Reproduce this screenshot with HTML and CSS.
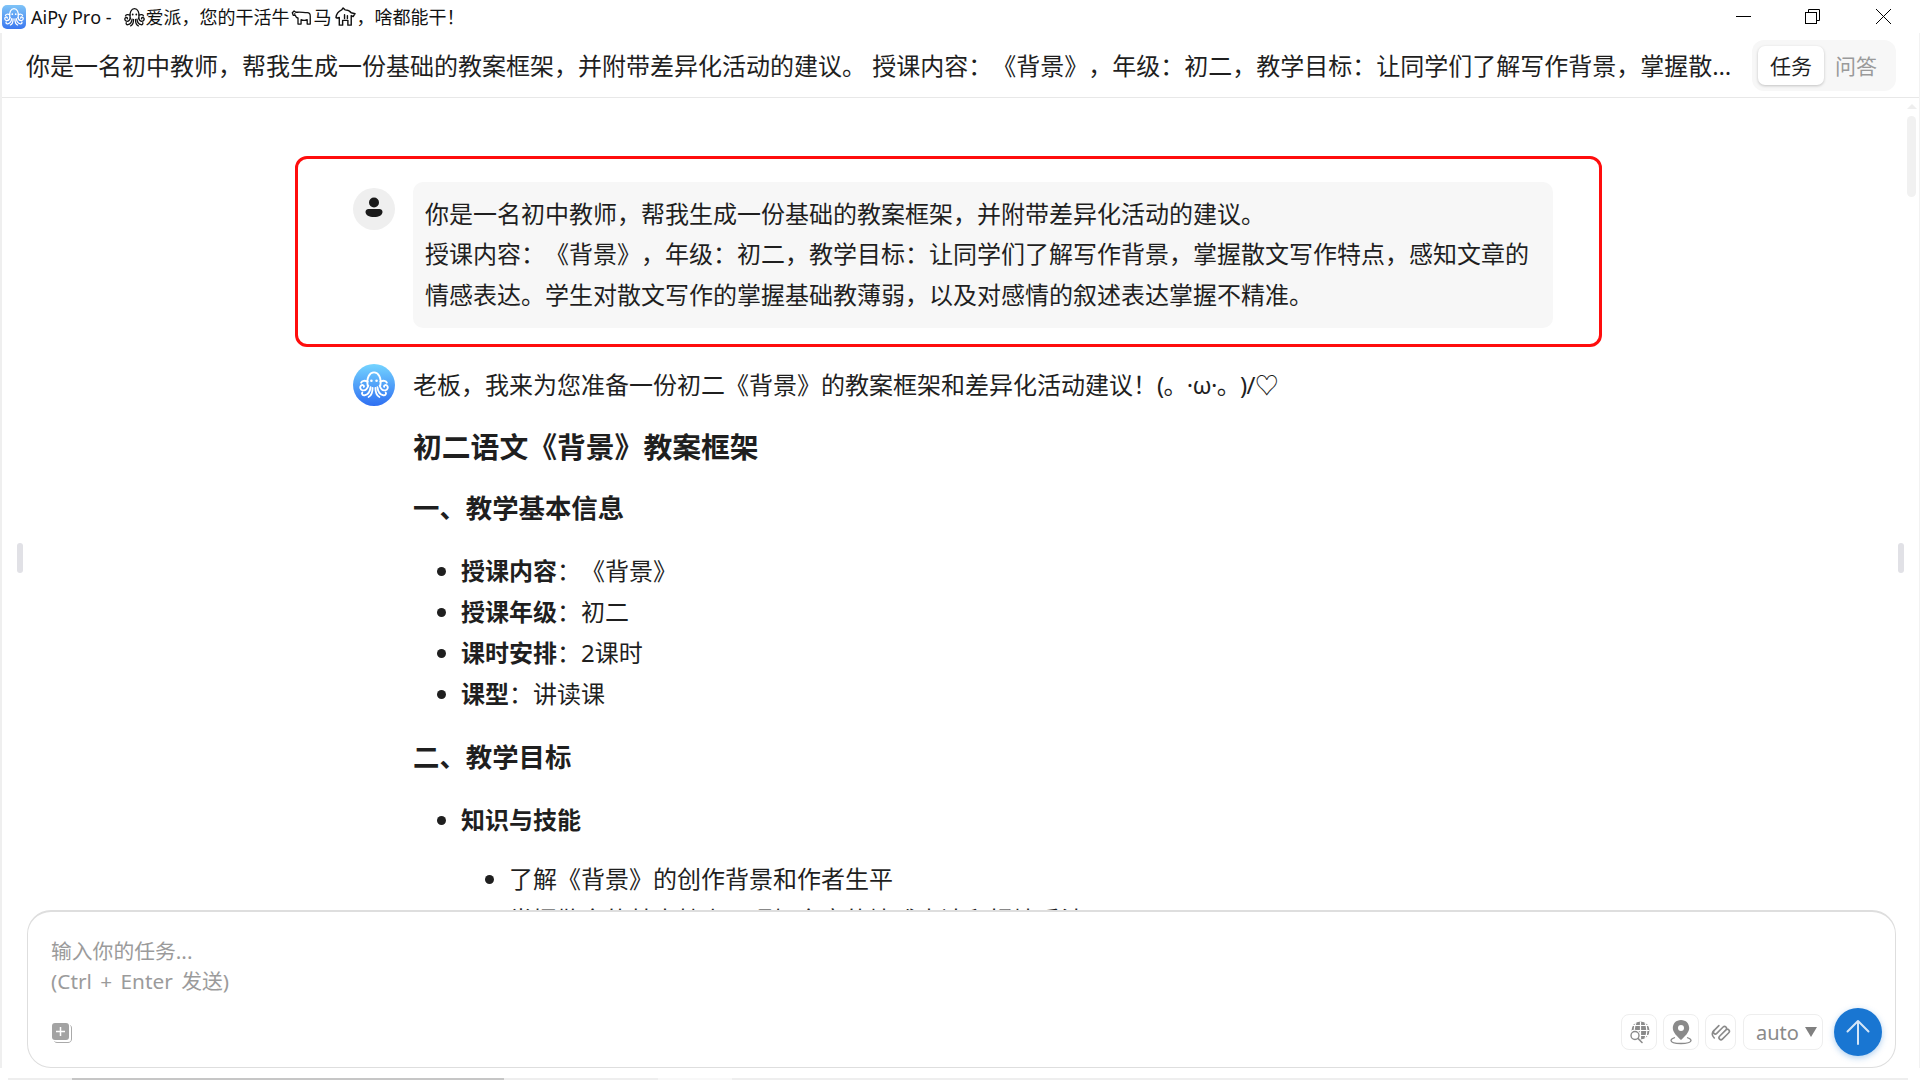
FILE: index.html
```html
<!DOCTYPE html>
<html lang="zh-CN">
<head>
<meta charset="utf-8">
<title>AiPy Pro</title>
<link rel="stylesheet" href="styles.css">
</head>
<body>
<svg class="defs" width="0" height="0" aria-hidden="true">
  <symbol id="octopus" viewBox="1.500 1.500 21 21">
    <g fill="none" stroke="currentColor" stroke-width="1.300" stroke-linecap="round" stroke-linejoin="round">
      <path d="M7.600 12.600C6.600 6.800 9 3.200 12 3.200s5.400 3.600 4.400 9.400"/>
      <path d="M8 12.500c-.8 2.400-2.400 3.600-4 3.200-1.600-.4-2.200-2.400-1-3.400 1-.7 2.200 0 1.900 1"/>
      <path d="M16 12.500c.8 2.400 2.400 3.600 4 3.200 1.600-.4 2.200-2.400 1-3.400-1-.7-2.200 0-1.900 1"/>
      <path d="M9.600 13.600c-.4 3-2 5.200-4.200 5.600-1.400.2-2.200-1-1.600-2"/>
      <path d="M14.400 13.600c.4 3 2 5.200 4.200 5.600 1.400.2 2.200-1 1.600-2"/>
      <path d="M11 14c0 3-.8 5.600-2.800 6.400"/>
      <path d="M13 14c0 3 .8 5.600 2.800 6.400"/>
      <path d="M7.600 9.600C5.400 8.600 3.600 9 3 10.400M16.400 9.600c2.200-1 4-.6 4.600.8"/>
    </g>
    <circle cx="10.200" cy="9" r=".9" fill="currentColor"/>
    <circle cx="13.800" cy="9" r=".9" fill="currentColor"/>
  </symbol>
</svg>

<header class="titlebar">
  <div class="title">
    <span class="appicon"><svg class="octo-white"><use href="#octopus"/></svg></span>
    <span class="title-latin">AiPy Pro -</span>
    <svg class="emoji"><use href="#octopus"/></svg>
    <span>爱派，您的干活牛</span>
    <svg class="emoji emoji-cow" viewBox="0 0 24 24" fill="none" stroke="currentColor" stroke-width="1.500" stroke-linejoin="round" stroke-linecap="round">
      <path d="M1.500 6.500l2-2 2 1.500h2c3-.5 7 .5 11 .5 2.500 0 3.500 1.500 3.500 4v9h-3.500v-5c-2 1-5 1-7 0v5H8v-7c-1 0-2.500-1-3-3H2.500z"/>
      <path d="M4 8h.5"/>
    </svg>
    <span>马</span>
    <svg class="emoji emoji-horse" viewBox="1 1 22 22" fill="none" stroke="currentColor" stroke-width="1.500" stroke-linejoin="round" stroke-linecap="round">
      <path d="M8 4l1.500-2 2 2c3 0 5 1 6.500 3l4 1-2 3-2-1v10h-3.500v-5H9v5H5.500v-8c-1 .5-2.500.5-3.500 0 .5-4 2.500-6.500 6-8z"/>
      <path d="M11 9v4M14 10v3"/>
    </svg>
    <span>，啥都能干！</span>
  </div>
  <div class="winctl">
    <svg width="15" height="15" viewBox="0 0 15 15"><path d="M0 7.500h15" stroke="#000" fill="none"/></svg>
    <svg width="15" height="15" viewBox="0 0 15 15" fill="none" stroke="#000"><rect x=".5" y="3.500" width="11" height="11"/><path d="M3.500 3.500V.5h11v11h-3"/></svg>
    <svg class="winctl-close" width="15" height="15" viewBox="0 0 15 15"><path d="M0 0l15 15M15 0L0 15" stroke="#000" fill="none"/></svg>
  </div>
</header>

<div class="app">
  <section class="taskbar">
    <p class="prompt">你是一名初中教师，帮我生成一份基础的教案框架，并附带差异化活动的建议。 授课内容：《背景》，年级：初二，教学目标：让同学们了解写作背景，掌握散文写作特点，感知文章的情感表达。学生对散文写作的掌握基础教薄弱，以及对感情的叙述表达掌握不精准。</p>
    <div class="tabs">
      <span class="tab tab-on">任务</span>
      <span class="tab">问答</span>
    </div>
  </section>

  <main class="main">
    <div class="chat">
      <div class="thread">
        <article class="msg msg-user">
          <span class="avatar avatar-user">
            <svg width="20" height="22" viewBox="0 0 20 22"><circle cx="10" cy="5.500" r="5"/><path d="M1.500 15c0-2 1.500-3 3-3h11c1.500 0 3 1 3 3 0 3-3.500 5-8.500 5s-8.500-2-8.500-5z"/></svg>
          </span>
          <div class="bubble">你是一名初中教师，帮我生成一份基础的教案框架，并附带差异化活动的建议。<br>授课内容：《背景》，年级：初二，教学目标：让同学们了解写作背景，掌握散文写作特点，感知文章的情感表达。学生对散文写作的掌握基础教薄弱，以及对感情的叙述表达掌握不精准。</div>
          <div class="annotation"></div>
        </article>
        <article class="msg msg-bot">
          <span class="avatar avatar-bot"><svg class="octo-white"><use href="#octopus"/></svg></span>
          <div class="reply">
            <p>老板，我来为您准备一份初二《背景》的教案框架和差异化活动建议！<span class="kao">(。·ω·。)/♡</span></p>
            <h1>初二语文《背景》教案框架</h1>
            <h2>一、教学基本信息</h2>
            <ul>
              <li><strong>授课内容</strong>：《背景》</li>
              <li><strong>授课年级</strong>：初二</li>
              <li><strong>课时安排</strong>：2课时</li>
              <li><strong>课型</strong>：讲读课</li>
            </ul>
            <h2>二、教学目标</h2>
            <ul>
              <li><strong>知识与技能</strong>
                <ul>
                  <li>了解《背景》的创作背景和作者生平</li>
                  <li>掌握散文的基本特点，理解文章的情感表达和抒情手法</li>
                </ul>
              </li>
            </ul>
          </div>
        </article>
      </div>
    </div>
    <div class="rail">
      <span class="rail-up"></span>
      <span class="rail-thumb"></span>
    </div>
  </main>

  <section class="composer">
    <div class="placeholder">输入你的任务...<br><span class="hint">(Ctrl + Enter 发送)</span></div>
    <div class="composer-foot">
      <span class="plus">
        <svg width="21" height="21" viewBox="0 0 21 21">
          <path d="M18.500 2.500c.6.6 1 1.200 1 2.500v11c0 2.200-1.300 3.500-3.500 3.500H5c-1.200 0-2-.4-2.500-1" fill="none" stroke="#aaa"/>
          <rect x="0" y="0" width="17" height="17" rx="3" fill="#a3a3a3"/>
          <path d="M8.500 4v9M4 8.500h9" stroke="#fff" stroke-width="1.500"/>
        </svg>
      </span>
      <div class="tools">
        <span class="tool">
          <svg width="24" height="24" viewBox="0 0 24 24">
            <circle cx="13.500" cy="10.500" r="9" fill="#8a8a8a"/>
            <path d="M4.500 10.500h18M13.500 1.500v18M9 3c-2.500 4-2.500 11 0 15M18 3c2.500 4 2.500 11 0 15M6 5.500h15M6 15.500h15" stroke="#fff" stroke-width="1.200" fill="none"/>
            <circle cx="8" cy="15.500" r="5.800" fill="#fff"/>
            <circle cx="8" cy="15.500" r="4" fill="#fff" stroke="#8a8a8a" stroke-width="1.400"/>
            <path d="M11 18.500l4 4" stroke="#8a8a8a" stroke-width="1.600" stroke-linecap="round"/>
          </svg>
        </span>
        <span class="tool">
          <svg width="24" height="26" viewBox="0 0 24 26">
            <path d="M12 1C7 1 3.800 4.600 3.800 9c0 4.500 4.500 8.500 8.200 12 3.700-3.500 8.200-7.500 8.200-12C20.200 4.600 17 1 12 1z" fill="#8a8a8a"/>
            <circle cx="12" cy="9" r="3" fill="#fff"/>
            <path d="M6 18.500c-2.500.8-4 1.800-4 3 0 1.800 4.500 3 10 3s10-1.200 10-3c0-1.200-1.500-2.200-4-3" fill="none" stroke="#8a8a8a" stroke-width="1.300"/>
          </svg>
        </span>
        <span class="tool tool-clip">
          <svg width="24" height="24" viewBox="0 0 24 24" fill="none" stroke="#8a8a8a" stroke-width="1.600" stroke-linecap="round">
            <g transform="rotate(45 12 12)"><path d="M6 9v7a2 2 0 0 0 4 0V7a2 2 0 0 1 4 0v9a2 2 0 0 0 4 0V7a2 2 0 0 0-4 0"/><path d="M6 16c0 3 2 5 5.500 5"/></g>
          </svg>
        </span>
        <span class="model">auto<svg width="12" height="10" viewBox="0 0 12 10"><path d="M0 0h12L6 10z" fill="#808080"/></svg></span>
        <span class="send">
          <svg width="24" height="26" viewBox="0 0 24 26" fill="none" stroke="#d5e6f7" stroke-width="2" stroke-linecap="round" stroke-linejoin="round"><path d="M12 25V2M1.500 12.500L12 2l10.500 10.500"/></svg>
        </span>
      </div>
    </div>
  </section>
  <span class="handle handle-l"></span>
  <span class="handle handle-r"></span>
</div>

<div class="hscroll">
  <span class="hs-a"></span><span class="hs-thumb"></span><span class="hs-b"></span><span class="hs-c"></span><span class="hs-d"></span>
</div>
</body>
</html>
```

FILE: styles.css
```css
* { box-sizing: border-box; }

html, body { margin: 0; height: 100%; }

body {
  width: 1920px;
  height: 1080px;
  overflow: hidden;
  display: flex;
  flex-direction: column;
  background: #fff;
  color: #1f1f1f;
  font-family: "Noto Sans", "Noto Sans CJK SC", sans-serif;
  font-size: 24px;
  text-spacing-trim: space-all;
  font-kerning: none;
}

.defs { position: absolute; }

/* title bar */
.titlebar {
  height: 33px;
  flex: none;
  display: flex;
  align-items: center;
  justify-content: space-between;
  padding: 0 29px 0 2px;
}

.title {
  display: flex;
  align-items: center;
  font-size: 18px;
  line-height: 24px;
  color: #111;
  padding-top: 1px;
}

.appicon {
  width: 24px;
  height: 24px;
  margin-right: 5px;
  border-radius: 5px;
  display: flex;
  align-items: center;
  justify-content: center;
  background: linear-gradient(180deg, #7fc4f7, #3b78f0);
}

.appicon .octo-white { width: 20px; height: 20px; }

.title-latin { margin-right: 12px; }

.emoji {
  width: 21px;
  height: 21px;
  flex: none;
  color: #111;
  margin-right: 1px;
}

.emoji-cow { margin: 0 2px 0 1px; }
.emoji-horse { margin: 0 1px 0 3px; }

.winctl { display: flex; gap: 54px; margin-top: -1px; }
.winctl-close { margin-left: 2px; }

/* main frame */
.app {
  flex: none;
  height: 1035px;
  position: relative;
  display: flex;
  flex-direction: column;
  border-left: 2px solid #efefef;
  border-right: 1px solid #f2f2f2;
}

.taskbar {
  flex: none;
  height: 65px;
  display: flex;
  align-items: center;
  gap: 18px;
  padding: 0 23px 0 24px;
  border-bottom: 1px solid #e8e8e8;
}

.prompt {
  flex: 1;
  min-width: 0;
  margin: 0;
  line-height: 41px;
  white-space: nowrap;
  overflow: hidden;
  text-overflow: ellipsis;
}

.tabs {
  flex: none;
  width: 144px;
  height: 51px;
  padding: 6px;
  display: flex;
  gap: 1px;
  border-radius: 12px;
  background: #f7f7f7;
}

.tab {
  width: 66px;
  height: 39px;
  display: flex;
  align-items: center;
  justify-content: center;
  font-size: 21px;
  color: #9a9a9a;
  border-radius: 7px;
}

.tab + .tab { width: 62px; }

.tab-on {
  color: #1f1f1f;
  background: #fff;
  box-shadow: 0 1px 3px rgba(0, 0, 0, .22);
}

/* conversation */
.main {
  flex: 1;
  min-height: 0;
  display: flex;
}

.chat {
  flex: 1;
  min-width: 0;
  overflow: hidden;
  padding-top: 84px;
}

.thread {
  width: 1200px;
  margin: 0 auto;
  display: flex;
  flex-direction: column;
  gap: 36px;
}

.msg {
  position: relative;
  display: flex;
  gap: 18px;
  align-items: flex-start;
}

.avatar {
  width: 42px;
  height: 42px;
  flex: none;
  border-radius: 50%;
  display: flex;
  align-items: center;
  justify-content: center;
}

.msg-user .avatar { margin-top: 6px; }

.avatar-user { background: #efefef; }
.avatar-user svg { fill: #1a1a1a; margin-top: -3px; }

.avatar-bot { background: linear-gradient(180deg, #74d4ff 0%, #2f6ff2 100%); }
.octo-white { width: 30px; height: 30px; color: #fff; }

.bubble {
  flex: 1;
  padding: 11.500px 12px 12.100px;
  line-height: 40.800px;
  background: #f7f7f7;
  border-radius: 10px;
}

.annotation {
  position: absolute;
  left: -58px;
  right: -49px;
  top: -26px;
  bottom: -19px;
  border: 3px solid #ff0d0d;
  border-radius: 12px;
  pointer-events: none;
}

.reply { flex: 1; min-width: 0; line-height: 41px; }
.reply p { margin: 0; }

.kao { letter-spacing: -.7px; }

.reply h1 {
  margin: 17px 0 15px;
  font-size: 28.800px;
  line-height: 49px;
  font-weight: 700;
}

.reply h2 {
  margin: 0;
  font-size: 26.400px;
  line-height: 45px;
  font-weight: 700;
}

.reply > ul { margin: 19px 0 21px; }
.reply ul { padding-left: 48px; list-style: disc; }
.reply ul ul { margin: 18px 0 0; list-style: disc; }

.reply strong { font-weight: 700; }

/* right scrollbar */
.rail {
  flex: none;
  width: 15px;
  padding: 6px 0 0 3px;
  display: flex;
  flex-direction: column;
  gap: 7px;
}

.rail-up {
  width: 0;
  height: 0;
  border-left: 5px solid transparent;
  border-right: 5px solid transparent;
  border-bottom: 5px solid #eee;
}

.rail-thumb {
  width: 9px;
  height: 81px;
  border-radius: 5px;
  background: #f1f1f1;
}

/* composer */
.composer {
  flex: none;
  height: 158px;
  margin: 0 23px 0 25px;
  display: flex;
  flex-direction: column;
  border: 1px solid #dedede;
  border-top-width: 2px;
  border-radius: 24px;
  background: #fff;
  padding: 24px 13px 11px 23px;
}

.placeholder {
  font-size: 20.800px;
  line-height: 30px;
  color: #9b9b9b;
}

.hint { word-spacing: 3px; }

.composer-foot {
  margin-top: auto;
  display: flex;
  align-items: center;
  justify-content: space-between;
}

.plus { display: flex; margin-left: 1px; margin-top: 3px; }

.tools { display: flex; align-items: center; gap: 6px; }

.tool {
  width: 36px;
  height: 36px;
  display: flex;
  align-items: center;
  justify-content: center;
  border: 1px solid #eeeeee;
  border-radius: 8px;
}

.tool-clip { width: 31px; }

.model {
  width: 80px;
  height: 36px;
  margin-left: 1px;
  margin-right: 5px;
  padding-left: 12px;
  display: flex;
  align-items: center;
  gap: 6px;
  font-size: 20px;
  color: #8a8a8a;
  border: 1px solid #eeeeee;
  border-radius: 8px;
}

.send {
  width: 48px;
  height: 48px;
  display: flex;
  align-items: center;
  justify-content: center;
  border-radius: 50%;
  background: #1976d2;
  box-shadow: 0 2px 6px rgba(25, 118, 210, .35);
}

.handle {
  position: absolute;
  top: 510px;
  width: 6px;
  height: 30px;
  border-radius: 3px;
  background: #e1e1e6;
}

.handle-l { left: 15px; }
.handle-r { right: 15px; }

/* bottom scrollbar */
.hscroll {
  flex: none;
  height: 2px;
  margin: 10px 12px 0 8px;
  display: flex;
}

.hs-a { width: 64px; background: #eeeeee; }
.hs-thumb { width: 432px; background: #c6c6c6; }
.hs-b { width: 154px; background: #eeeeee; }
.hs-c { width: 74px; background: #f8f8f8; }
.hs-d { flex: 1; background: #eeeeee; }
```
